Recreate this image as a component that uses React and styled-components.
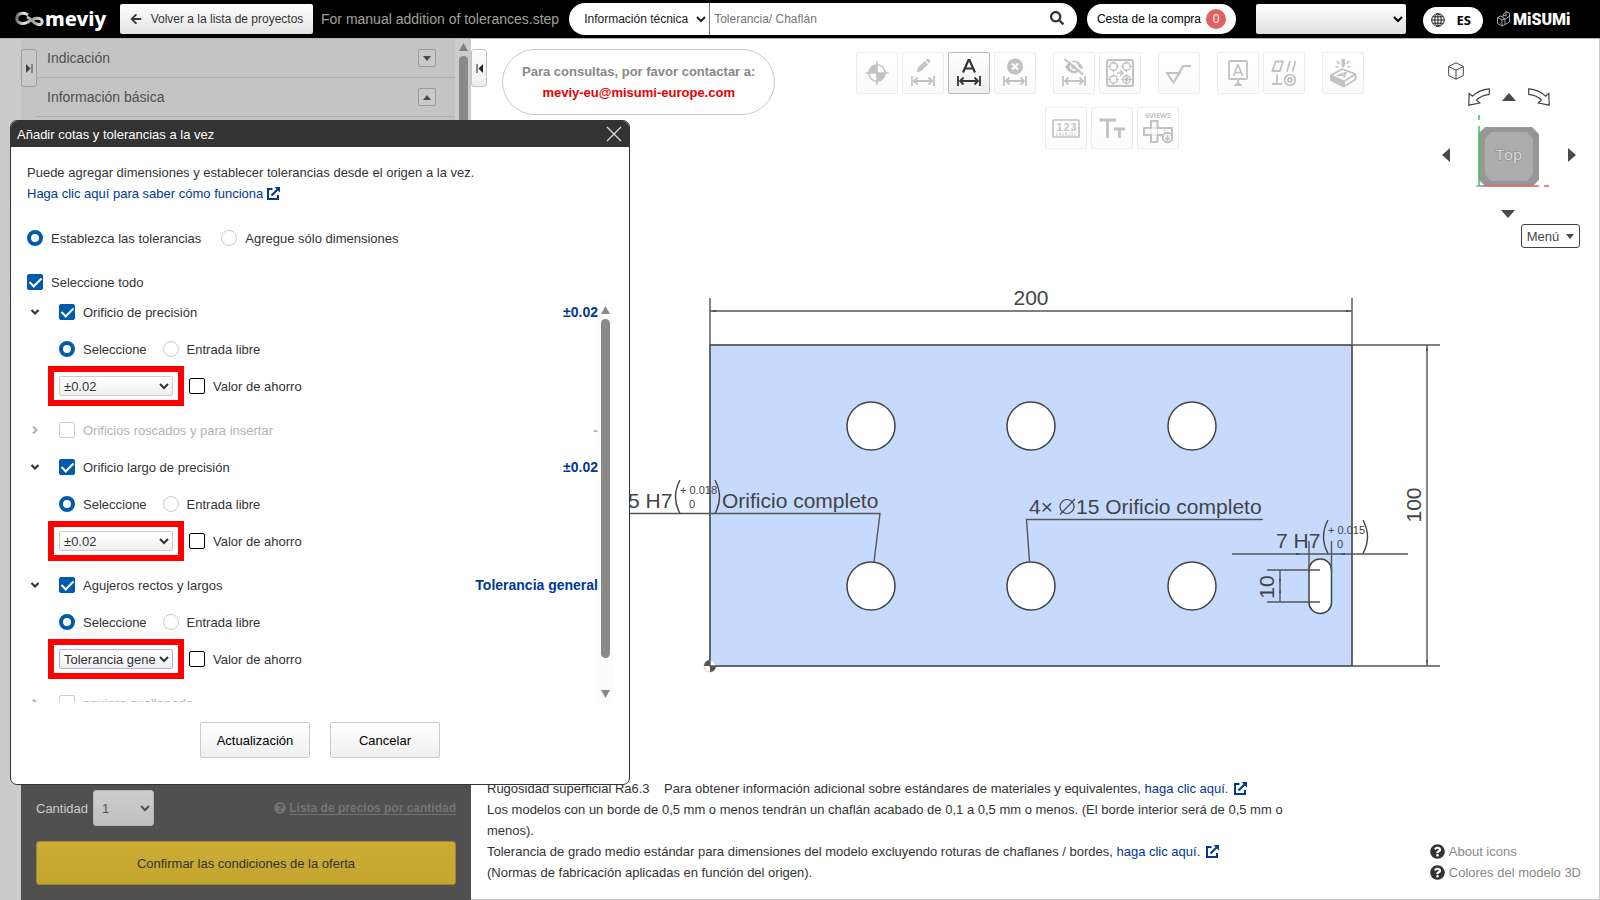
import React, { useState } from 'react'
import styled, { createGlobalStyle } from 'styled-components'
import { FaArrowLeft, FaSearch, FaQuestionCircle } from 'react-icons/fa'

const GlobalStyle = createGlobalStyle`
  * {
    box-sizing: border-box;
  }

  body {
    margin: 0;
    background: #fff;
    color: #333;
    font-family: "Liberation Sans", Arial, sans-serif;
    font-size: 13px;
  }

  button, input, select {
    font-family: inherit;
    font-size: 13px;
  }

  a {
    color: #003894;
    text-decoration: none;
  }
`

const Page = styled.div`
  display: flex;
  flex-direction: column;
  min-height: 100vh;
`

/* ---------- header ---------- */

const Header = styled.header`
  display: flex;
  align-items: center;
  height: 38px;
  padding: 0 29px 0 15px;
  background: #000;
`

const Logo = styled.a`
  display: flex;
  align-items: center;
  width: 105px;
  color: #fff;
  font-family: "Noto Sans", "Open Sans", sans-serif;
  font-size: 20px;
  font-weight: 800;
  line-height: 24px;
`

const BackButton = styled.button`
  display: flex;
  align-items: center;
  justify-content: center;
  gap: 9px;
  width: 193px;
  height: 30px;
  margin-right: 8px;
  padding: 0;
  border: 0;
  border-radius: 2px;
  background: linear-gradient(#fff, #e2e2e2);
  color: #333;
  font-size: 12px;
  white-space: nowrap;
`

const FileName = styled.span`
  margin-right: 10px;
  color: #a3a09b;
  font-size: 14px;
  white-space: nowrap;
`

const Search = styled.form`
  display: flex;
  flex: 1;
  height: 32px;
  overflow: hidden;
  border-radius: 16px;
  background: #fff;

  select {
    width: 141px;
    padding: 0 2px 0 11px;
    border: 0;
    border-right: 1px solid #777;
    background: transparent;
    color: #222;
    font-size: 12px;
  }

  input {
    flex: 1;
    min-width: 0;
    padding: 0 4px;
    border: 0;
    background: transparent;
    font-size: 12px;
  }

  input::placeholder {
    color: #777;
  }

  button {
    padding: 0 13px;
    border: 0;
    background: transparent;
    color: #333;
    font-size: 14px;
    line-height: 1;
  }
`

const CartButton = styled.button`
  display: flex;
  align-items: center;
  gap: 5px;
  height: 30px;
  margin: 0 20px 0 10px;
  padding: 0 10px;
  border: 0;
  border-radius: 15px;
  background: #fff;
  color: #000;
  font-size: 12px;
  white-space: nowrap;

  b {
    width: 20px;
    border-radius: 50%;
    background: #e06161;
    color: #fff;
    font-weight: 400;
    line-height: 20px;
  }
`

const AccountSelect = styled.select`
  width: 150px;
  height: 30px;
  padding: 0 4px 0 0;
  border: 0;
  border-radius: 2px;
  background: linear-gradient(#fff, #e0e0e0);
`

const LangButton = styled.button`
  display: flex;
  align-items: center;
  justify-content: space-between;
  width: 60px;
  height: 27px;
  margin: 2px 14px 0 17px;
  padding: 0 12px 0 8px;
  border: 0;
  border-radius: 14px;
  background: #fff;
  color: #000;
  font-family: "Open Sans", sans-serif;
  font-weight: 700;
`

const Misumi = styled.a`
  display: flex;
  align-items: center;
  gap: 3px;
  width: 74px;
  color: #fff;
  font-family: Roboto, sans-serif;
  font-size: 16px;
  font-weight: 900;

  svg {
    flex: none;
  }
`

/* ---------- left panel ---------- */

const Body = styled.div`
  display: flex;
  flex: 1;
  border-top: 1px solid #b5b5b5;
`

const Strip = styled.div`
  width: 21px;
  background: #cbcbcb;
`

const Sidebar = styled.aside`
  display: flex;
  flex-direction: column;
  width: 450px;
  background: #c4c4c4;
`

const SideScroll = styled.div`
  display: flex;
  flex: 1;
`

const Toggle = styled.button`
  display: flex;
  align-items: center;
  justify-content: center;
  flex: none;
  width: 16px;
  height: 38px;
  margin-top: 10px;
  padding: 0;
  border: 1px solid ${p => (p.$dim ? '#9e9e9e' : '#c2c2c2')};
  border-radius: 3px;
  background: ${p => (p.$dim ? '#c9c9c9' : 'linear-gradient(#fff, #eee)')};
`

const Sections = styled.div`
  flex: 1;
`

const SideRow = styled.div`
  display: flex;
  align-items: center;
  justify-content: space-between;
  height: 39px;
  padding: 0 19px 0 10px;
  border-bottom: 1px solid #adadad;
  color: #505050;
  font-size: 14px;

  button {
    display: flex;
    align-items: center;
    justify-content: center;
    width: 18px;
    height: 18px;
    padding: 0;
    border: 1px solid #999;
    border-radius: 2px;
    background: #c9c9c9;
  }
`

const Order = styled.form`
  display: flex;
  flex-direction: column;
  gap: 15px;
  padding: 15px;
  background: #505050;
  color: #ccc;
`

const Quantity = styled.div`
  display: flex;
  align-items: center;

  select {
    width: 61px;
    height: 36px;
    margin-left: 5px;
    padding: 0 7px 0 4px;
    border: 1px solid #b4b4b4;
    border-radius: 3px;
    background: linear-gradient(#cdcdcd, #c0c0c0);
    color: #505050;
  }

  a {
    display: flex;
    align-items: center;
    gap: 3px;
    margin-left: auto;
    color: #747474;
    font-size: 12px;
    font-weight: 700;
  }

  u {
    text-underline-offset: 2px;
  }
`

const ConfirmButton = styled.button`
  height: 44px;
  border: 1px solid #9c872b;
  border-radius: 3px;
  background: linear-gradient(#ccac33, #c3a630);
  color: #333;
`

/* ---------- scroll bars ---------- */

const ScrollTrack = styled.div`
  display: flex;
  flex-direction: column;
  align-items: center;
  gap: 5px;
  flex: none;
  width: ${p => (p.$wide ? 16 : 15)}px;
  padding: 4px 0;
  background: ${p => (p.$wide ? '#ccc' : '#fcfcfc')};

  svg {
    flex: none;
    display: block;
  }
`

const Thumb = styled.div`
  flex: ${p => p.$grow};
  width: 9px;
  border-radius: 5px;
  background: #8a8a8a;
`

const Rest = styled.div`
  flex: ${p => p.$grow};
`

/* ---------- workspace ---------- */

const Workspace = styled.main`
  display: flex;
  flex-direction: column;
  flex: 1;
  min-width: 0;
  border: solid #ccc;
  border-width: 0 1px 1px 0;
`

const TopRow = styled.div`
  display: flex;
  align-items: flex-start;
  height: 210px;
  padding-right: 19px;
`

const Contact = styled.p`
  margin: 10px auto 0 15px;
  padding: 11px 19px;
  border: 1px solid #c8c8c8;
  border-radius: 33px;
  color: #888;
  font-weight: 700;
  line-height: 21px;
  text-align: center;
  white-space: nowrap;

  a {
    color: #e60000;
  }
`

const Toolbar = styled.div`
  display: flex;
  flex-direction: column;
  align-items: center;
  gap: 13px;
  padding: 13px 0 0 2px;
`

const ToolLine = styled.div`
  display: flex;
  gap: 17px;

  & + & {
    padding-left: 4px;
  }
`

const ToolGroup = styled.div`
  display: flex;
  gap: 4px;
`

const Tool = styled.button`
  width: 42px;
  height: 42px;
  padding: 0;
  border: 1px solid ${p => (p.$active ? '#bbb' : '#ececec')};
  border-radius: 2px;
  background: ${p => (p.$active ? 'linear-gradient(#fff, #eee)' : 'linear-gradient(#fff, #fbfbfb)')};
  color: ${p => (p.$active ? '#333' : '#c2c2c2')};

  svg {
    display: block;
    margin: -1px;
  }
`

const Navigator = styled.div`
  display: flex;
  flex-direction: column;
  width: 138px;
  margin-left: auto;
  padding-top: 23px;

  button {
    padding: 0;
    border: 0;
    background: none;
  }

  svg {
    display: block;
  }
`

/* every row but the menu is centred on the cube */
const NavRow = styled.div`
  display: flex;
  align-items: center;
  width: 134px;
`

const HomeRow = styled(NavRow)`
  padding-left: 6px;
`

const TurnRow = styled(NavRow)`
  justify-content: center;
  gap: 12px;
  height: 31px;
  padding-top: 3px;
`

const CubeRow = styled(NavRow)`
  justify-content: space-between;
  height: 88px;
  margin-bottom: 11px;
`

const DownRow = styled(NavRow)`
  justify-content: center;
  align-items: flex-start;
  height: 14px;
  padding-right: 2px;
`

const MenuButton = styled.button`
  && {
    display: flex;
    align-items: center;
    justify-content: center;
    gap: 7px;
    align-self: flex-end;
    width: 59px;
    height: 24px;
    border: 1px solid #444;
    border-radius: 3px;
    background: #fff;
    color: #444;
  }
`

const Canvas = styled.svg`
  display: block;
  flex: 1 1 0;
  width: 100%;
  min-height: 0;
  font-family: "Liberation Sans", Arial, sans-serif;
`

const Notes = styled.footer`
  display: flex;
  align-items: flex-end;
  justify-content: space-between;
  gap: 20px;
  padding: 0 18px 16px 16px;
  line-height: 21px;

  p {
    max-width: 810px;
    margin: 0;
  }
`

const HelpLinks = styled.div`
  a {
    display: flex;
    align-items: center;
    gap: 4px;
    color: #888;
    white-space: nowrap;
  }

  svg {
    color: #333;
    font-size: 15px;
  }
`

const ExternalIcon = styled.svg`
  margin-left: ${p => (p.$tight ? 4 : 6)}px;
  vertical-align: -2px;
`

/* ---------- dialog ---------- */

const Dialog = styled.section`
  position: absolute;
  top: 120px;
  left: 10px;
  width: 620px;
  overflow: hidden;
  border: 1px solid #333;
  border-radius: 7px;
  background: #fff;
`

const DialogTitle = styled.div`
  display: flex;
  align-items: center;
  justify-content: space-between;
  height: 26px;
  padding: 0 7px 0 6px;
  background: #333;
  color: #fff;

  h2 {
    margin: 0;
    font-size: 13px;
    font-weight: 400;
  }

  button {
    padding: 0;
    border: 0;
    background: none;
  }

  svg {
    display: block;
  }
`

const DialogBody = styled.form`
  padding: 15px 16px 26px;
`

const Intro = styled.p`
  margin: 0 0 24px;
  line-height: 21px;
`

const Line = styled.div`
  display: flex;
  align-items: center;
  gap: ${p => (p.$indent ? 16 : 20)}px;
  height: 20px;
  margin-bottom: ${p => p.$space || 17}px;
  padding-left: ${p => (p.$indent ? 32 : 0)}px;
  color: ${p => (p.$off ? '#b3b3b3' : '#333')};
`

const Option = styled.label`
  display: flex;
  align-items: center;
  gap: 8px;
`

const Radio = styled.input`
  appearance: none;
  width: 16px;
  height: 16px;
  margin: 0;
  border: 1px solid #ccc;
  border-radius: 50%;
  background: #fff;

  &:checked {
    border: 4px solid #005bac;
  }
`

const Check = styled.input`
  appearance: none;
  display: grid;
  place-items: center;
  width: 16px;
  height: 16px;
  margin: 0;
  border: 1px solid #000;
  border-radius: 2px;
  background: #fff;

  &:disabled {
    border-color: #ccc;
  }

  &:checked {
    border-color: #005bac;
    background: #005bac;
  }

  &:checked::after {
    content: "";
    width: 5px;
    height: 10px;
    margin-bottom: 3px;
    border: solid #fff;
    border-width: 0 2px 2px 0;
    transform: rotate(45deg);
  }
`

const List = styled.div`
  display: flex;
  height: 400px;
  margin-bottom: 20px;
  overflow: hidden;
`

const ListItems = styled.div`
  flex: 1;
`

const Group = styled.div`
  padding-bottom: ${p => (p.$open ? 7 : 0)}px;
`

const Fold = styled.button`
  display: flex;
  justify-content: center;
  width: 16px;
  margin-right: -4px;
  padding: 0;
  border: 0;
  background: none;
  color: inherit;
`

const Value = styled.strong`
  margin-left: auto;
  color: ${p => (p.$off ? '#b3b3b3' : '#003894')};
  font-size: 14px;
`

const Marked = styled.div`
  margin: -4px -5px;
  padding: 4px 5px;
  outline: 6px solid #f00;

  select {
    display: block;
    width: 114px;
    height: 20px;
    padding: 0;
    border: 1px solid ${p => (p.$focus ? '#a9b4f5' : '#ccc')};
    border-radius: 2px;
    background: linear-gradient(#fff, #efefef);
    color: #333;
  }
`

const Actions = styled.div`
  display: flex;
  justify-content: center;
  gap: 20px;

  button {
    width: 110px;
    height: 36px;
    border: 1px solid #ccc;
    border-radius: 2px;
    background: linear-gradient(#fff, #efefef);
    color: #000;
  }
`

/* ---------- small drawings ---------- */

const shapes = {
  up: [14, 8, '0,8 7,0 14,8'],
  down: [14, 8, '0,0 14,0 7,8'],
  left: [8, 14, '8,0 8,14 0,7'],
  right: [8, 14, '0,0 8,7 0,14'],
  smallUp: [8, 5, '0,5 4,0 8,5'],
  smallDown: [8, 5, '0,0 8,0 4,5'],
  barUp: [9, 8, '0,8 4.5,0 9,8'],
  barDown: [9, 8, '0,0 9,0 4.5,8'],
}

const Triangle = ({ shape, color = '#4a4a4a' }) => {
  const [w, h, points] = shapes[shape]
  return (
    <svg width={w} height={h} viewBox={`0 0 ${w} ${h}`} fill={color} aria-hidden="true">
      <polygon points={points} />
    </svg>
  )
}

const Chevron = ({ open }) => (
  <svg width="10" height="10" viewBox="0 0 10 10" fill="none" stroke="currentColor" strokeWidth="2.2" aria-hidden="true">
    <path d={open ? 'M1.500 3 5 6.500 8.500 3' : 'M3 1.500 6.500 5 3 8.500'} />
  </svg>
)

const External = ({ tight }) => (
  <ExternalIcon $tight={tight} width="13" height="13" viewBox="0 0 13 13" fill="none" stroke="#003894" strokeWidth="2" aria-hidden="true">
    <path d="M5.5 2H1v10h10V8M4.5 8.5 10.5 2.5" />
    <path d="M7.5 0H13v5.5z" fill="#003894" stroke="none" />
  </ExternalIcon>
)

const Dimension = () => (
  <path d="M10 24v10M32 24v10M12 29h18M15.5 25.5 12 29l3.5 3.5M26.5 25.5 30 29l-3.5 3.5" fill="none" stroke="currentColor" strokeWidth="1.8" />
)

const Target = ({ x, y, full }) => (
  <g transform={`translate(${x} ${y})`} fill="none" stroke="currentColor">
    <circle r="3.8" strokeWidth="1.4" />
    <path d="M0-5.5v3M0 2.5v3M-5.500 0h3M2.500 0h3" />
    {full && <circle r="1.8" fill="currentColor" />}
  </g>
)

const toolIcons = {
  origin: (
    <g stroke="currentColor" strokeWidth="1.6" fill="none">
      <circle cx="21" cy="21" r="8.200" />
      <path d="M21 9v24M9.500 21h23" />
      <path d="M21 21v-8.200a8.200 8.200 0 0 0-8.200 8.200zM21 21v8.200a8.200 8.200 0 0 0 8.200-8.200z" fill="currentColor" stroke="none" />
    </g>
  ),
  edit: (
    <g>
      <path d="m14.500 20.500 1.500-5 6.800-6.500 3.200 3.200-6.700 6.700zM23.800 8.200l1.300-1.200q1-.6 2 .3l.9.900q.8 1-.1 2l-1 1z" fill="currentColor" />
      <Dimension />
    </g>
  ),
  auto: (
    <g>
      <path d="M15 20.500 20.500 8h1L27 20.500M17 16.500h8" fill="none" stroke="currentColor" strokeWidth="2.200" />
      <Dimension />
    </g>
  ),
  remove: (
    <g>
      <circle cx="21" cy="14.500" r="8" fill="currentColor" />
      <path d="m18 11.500 6 6M24 11.500l-6 6" stroke="#fff" strokeWidth="2" />
      <Dimension />
    </g>
  ),
  hide: (
    <g>
      <path d="M12 15q9-13 18 0-9 13-18 0z" fill="currentColor" />
      <circle cx="21" cy="14.500" r="3.500" fill="none" stroke="#fff" strokeWidth="1.500" />
      <path d="m13.500 6 17 14" stroke="#fff" strokeWidth="1.600" />
      <path d="m11.500 7 18.500 15.500" stroke="currentColor" strokeWidth="1.800" />
      <Dimension />
    </g>
  ),
  holes: (
    <g>
      <rect x="8" y="8" width="26" height="26" rx="2" fill="none" stroke="currentColor" strokeWidth="2" />
      <Target x="14.500" y="14.500" />
      <Target x="27.500" y="14.500" />
      <Target x="14.500" y="27.500" />
      <Target x="27.500" y="27.500" full />
      <path d="M18 21h5.500M21 18l3 3-3 3" fill="none" stroke="currentColor" strokeWidth="1.600" />
    </g>
  ),
  surface: (
    <path d="M9 21h12.500l-6 9.500zM15.500 30.500 25 14h8" fill="none" stroke="currentColor" strokeWidth="2" />
  ),
  datum: (
    <g>
      <rect x="12" y="9" width="18" height="18" rx="1" fill="none" stroke="currentColor" strokeWidth="1.800" />
      <path d="M16.500 24 20.600 13h.8l4.100 11M18 20.500h6" fill="none" stroke="currentColor" strokeWidth="1.700" />
      <path d="M21 27v3" stroke="currentColor" strokeWidth="2" />
      <path d="m16.500 34 4.500-5 4.500 5z" fill="currentColor" />
    </g>
  ),
  geometry: (
    <g fill="none" stroke="currentColor" strokeWidth="1.800">
      <path d="M12.500 9.500H20L17 19H9.500zM27 9l-3 10.500M32.500 9l-3 10.500M14 22.500V32M9 32h10" />
      <circle cx="27" cy="28" r="5.300" />
      <circle cx="27" cy="28" r="2" />
    </g>
  ),
  engrave: (
    <g fill="none" stroke="currentColor" strokeWidth="1.700" strokeLinejoin="round">
      <path d="m9 23.500 11-6.500 13.500 5L22 29.500z" />
      <path d="M9 23.500v4.500L22 34.500l11.500-7V22M22 29.500v5" />
      <path d="M9 23.500 22 29.500v5L9 28z" fill="currentColor" />
      <path d="m15 24 9-3.500-2 5M18 22.500l4 1.500" />
      <path d="m15 9 2.500 3M27 9l-2.500 3M13.500 14.500l3 .5M28.500 14.500l-3 .5" />
      <path d="M19.500 7h3.500v6l-1.800 3-1.700-3z" fill="currentColor" stroke="none" />
    </g>
  ),
  ruler: (
    <g>
      <rect x="8" y="13" width="26" height="17" rx="1" fill="none" stroke="currentColor" strokeWidth="1.700" />
      <g fontSize="10" fontWeight="700" textAnchor="middle" fill="currentColor">
        <text x="14.500" y="24">1</text>
        <text x="21.500" y="24">2</text>
        <text x="28.500" y="24">3</text>
      </g>
      <path d="M12 29v-2.500M15 29v-4M18 29v-2.500M21 29v-4M24 29v-2.500M27 29v-4M30 29v-2.500" stroke="currentColor" />
    </g>
  ),
  text: (
    <path d="M8.500 13H25M16.500 13v18M23 22h11M28.500 22v9" fill="none" stroke="currentColor" strokeWidth="2.800" />
  ),
  views: (
    <g fill="none" stroke="currentColor">
      <text x="21" y="11" textAnchor="middle" fontSize="7" fontWeight="700" fill="currentColor" stroke="none" fontFamily="Open Sans, sans-serif">6VIEWS</text>
      <path d="M14 14h6.500v7H35v7H20.500v7H14v-7H7v-7h7z" strokeWidth="2" strokeLinejoin="round" />
      <path d="M14 21h6.500v7H14zM27.500 21v7" strokeWidth=".6" />
      <circle cx="30.500" cy="30.500" r="4.800" fill="#fff" strokeWidth="2" />
      <path d="M30.500 27.500v5M28.300 30.800l2.200 2.200 2.200-2.200" strokeWidth="1.600" />
    </g>
  ),
}

const toolRows = [
  [
    [['origin', 'Origen'], ['edit', 'Editar cota'], ['auto', 'Añadir cotas'], ['remove', 'Eliminar cota']],
    [['hide', 'Ocultar cotas'], ['holes', 'Agrupar orificios']],
    [['surface', 'Rugosidad']],
    [['datum', 'Referencia'], ['geometry', 'Tolerancia geométrica']],
    [['engrave', 'Grabado']],
  ],
  [[['ruler', 'Regla'], ['text', 'Texto'], ['views', 'Seis vistas']]],
]

const Turn = ({ flip }) => (
  <svg width="22" height="18" viewBox="0 0 22 18" fill="#fff" stroke="#444" strokeWidth="1.200" aria-hidden="true">
    <path
      transform={flip ? 'translate(22 0) scale(-1 1)' : undefined}
      d="M.8 17.200 1.200 5.500l3.300 2.700Q11 1.500 21.300.8v5.500Q13 7.200 8.500 12l3.300 3z"
    />
  </svg>
)

const ViewCube = () => (
  <svg width="84" height="88" viewBox="-3 0 84 88" aria-label="Top">
    <path d="M15 16h47l7 7v46l-6 6H15l-6-6V22z" fill="#979797" />
    <path d="M21 21h36l6 7v35l-6 7H21l-6-7V28z" fill="#acacac" />
    <path d="M9 4v5M9 15v60" stroke="#34c759" strokeWidth="1.500" />
    <path d="M9 75h60M74 75h5" stroke="#f25555" strokeWidth="1.500" />
    <path d="M6 75h7" stroke="#7ab8f5" strokeWidth="1.500" />
    <text x="39" y="49" textAnchor="middle" fontSize="15" fill="#dcdcdc" stroke="#949494" strokeWidth="1.500" paintOrder="stroke" fontFamily="Open Sans, sans-serif">Top</text>
  </svg>
)

/* ---------- part drawing ---------- */

const holes = [[871, 426], [1031, 426], [1192, 426], [871, 586], [1031, 586], [1192, 586]]

const Fit = ({ x, y, upper }) => (
  <g transform={`translate(${x} ${y})`}>
    <path d="M6-28Q-3-11 6 5.500M41-28Q50-11 41 5.500" fill="none" stroke="#444" strokeWidth="1.400" />
    <g fontSize="11">
      <text x="6" y="-14">+ {upper}</text>
      <text x="15" y="0">0</text>
    </g>
  </g>
)

const PartDrawing = () => (
  <Canvas viewBox="471 249 1128 520" preserveAspectRatio="xMinYMin meet">
    <rect x="710" y="345" width="642" height="321" fill="#c6dafe" stroke="#444" strokeWidth="1.600" />
    <g fill="#fff" stroke="#444" strokeWidth="1.500">
      {holes.map(([cx, cy]) => <circle key={`${cx}-${cy}`} cx={cx} cy={cy} r="24" />)}
      <rect x="1309" y="559" width="22.500" height="54.500" rx="11" />
    </g>
    <g fill="none" stroke="#555" strokeWidth="1.400">
      <path d="M710 298v47M1352 298v47M710 311h642" />
      <path d="M1352 345h88M1352 666h88M1427 345v321" />
      <path d="M629 513.500h251l-6 48.500" />
      <path d="M1263 519.500h-236.500l3 42" />
      <path d="M1232 554h176M1309 541v32M1331.500 541v32" />
      <path d="M1267 570h53M1267 602h53M1280 570v32" />
    </g>
    <g fill="#444">
      <path d="M711 311l5-1v2zM1351 311l-5-1v2zM1427 346l-1 5h2zM1427 665l-1-5h2zM1301 554l-5-1v2zM1340 554l5-1v2zM1280 583l-1-4h2zM1280 589l-1 4h2z" />
    </g>
    <circle cx="710" cy="666" r="6" fill="#fff" stroke="#aaa" strokeWidth=".6" />
    <path d="M710 666v-6a6 6 0 0 0-6 6zM710 666v6a6 6 0 0 0 6-6z" fill="#555" />
    <path d="M710 659v7h7" fill="none" stroke="#555" strokeWidth="1.400" />
    <g fill="#444" fontSize="21">
      <text x="1031" y="305" textAnchor="middle">200</text>
      <text transform="translate(1421 505) rotate(-90)" textAnchor="middle">100</text>
      <text transform="translate(1274 587) rotate(-90)" textAnchor="middle">10</text>
      <text x="628" y="508">5 H7</text>
      <Fit x="674" y="508" upper="0.018" />
      <text x="722" y="508">Orificio completo</text>
      <text x="1029" y="514">4×</text>
      <g fill="none" stroke="#444" strokeWidth="1.200">
        <circle cx="1067" cy="506.500" r="7" />
        <path d="m1060 514.500 15-15.500" />
      </g>
      <text x="1076" y="514">15 Orificio completo</text>
      <text x="1276" y="548">7 H7</text>
      <Fit x="1322" y="548" upper="0.015" />
    </g>
  </Canvas>
)

/* ---------- tolerance list ---------- */

const groups = [
  { id: 'precision', name: 'Orificio de precisión', value: '±0.02', open: true },
  { id: 'threaded', name: 'Orificios roscados y para insertar', value: '-' },
  { id: 'slot', name: 'Orificio largo de precisión', value: '±0.02', open: true },
  { id: 'straight', name: 'Agujeros rectos y largos', value: 'Tolerancia general', open: true, focus: true },
  { id: 'countersunk', name: 'agujero avellanado', value: '' },
]

const ToleranceGroup = ({ group }) => {
  const { id, name, value, open, focus } = group
  return (
    <Group $open={open}>
      <Line $off={!open}>
        <Fold type="button" aria-label={name}><Chevron open={open} /></Fold>
        <Option>
          <Check type="checkbox" defaultChecked={open} disabled={!open} />
          {name}
        </Option>
        <Value $off={!open}>{value}</Value>
      </Line>
      {open && (
        <>
          <Line $indent>
            <Option><Radio type="radio" name={`${id}-mode`} defaultChecked />Seleccione</Option>
            <Option><Radio type="radio" name={`${id}-mode`} />Entrada libre</Option>
          </Line>
          <Line $indent>
            <Marked $focus={focus}>
              <select aria-label={name} defaultValue={value}>
                <option>{value}</option>
              </select>
            </Marked>
            <Option><Check type="checkbox" />Valor de ahorro</Option>
          </Line>
        </>
      )}
    </Group>
  )
}

const ToleranceDialog = ({ onClose }) => (
  <Dialog role="dialog" aria-labelledby="dialog-title">
    <DialogTitle>
      <h2 id="dialog-title">Añadir cotas y tolerancias a la vez</h2>
      <button type="button" aria-label="Cerrar" onClick={onClose}>
        <svg width="16" height="16" viewBox="0 0 16 16" stroke="#ddd" strokeWidth="1.200"><path d="m1 1 14 14M15 1 1 15" /></svg>
      </button>
    </DialogTitle>
    <DialogBody onSubmit={e => e.preventDefault()}>
      <Intro>
        Puede agregar dimensiones y establecer tolerancias desde el origen a la vez.<br />
        <a href="#ayuda">Haga clic aquí para saber cómo funciona<External tight /></a>
      </Intro>
      <Line $space={24}>
        <Option><Radio type="radio" name="mode" defaultChecked />Establezca las tolerancias</Option>
        <Option><Radio type="radio" name="mode" />Agregue sólo dimensiones</Option>
      </Line>
      <Line $space={10}>
        <Option><Check type="checkbox" defaultChecked />Seleccione todo</Option>
      </Line>
      <List>
        <ListItems>
          {groups.map(group => <ToleranceGroup key={group.id} group={group} />)}
        </ListItems>
        <ScrollTrack>
          <Triangle shape="barUp" color="#8a8a8a" />
          <Thumb $grow={339} />
          <Rest $grow={22} />
          <Triangle shape="barDown" color="#8a8a8a" />
        </ScrollTrack>
      </List>
      <Actions>
        <button type="submit">Actualización</button>
        <button type="button" onClick={onClose}>Cancelar</button>
      </Actions>
    </DialogBody>
  </Dialog>
)

const TopBar = () => (
  <Header>
    <Logo href="#inicio">
      <svg width="30" height="16" viewBox="0 0 30 16" fill="none" aria-hidden="true">
        <defs>
          <linearGradient id="metal"><stop stopColor="#777" /><stop offset=".3" stopColor="#eee" /><stop offset=".6" stopColor="#999" /><stop offset="1" stopColor="#ddd" /></linearGradient>
        </defs>
        <path d="M13 4C9 1 2 2 1.800 7.500c0 5.500 7 6 11.200 3.500 3-2 8-5.500 12.500-3 3 2 1.500 6-2 5.500-4-.5-7-5.500-11.500-7.500" stroke="url(#metal)" strokeWidth="3" />
      </svg>
      meviy
    </Logo>
    <BackButton type="button"><FaArrowLeft size={12} />Volver a la lista de proyectos</BackButton>
    <FileName>For manual addition of tolerances.step</FileName>
    <Search onSubmit={e => e.preventDefault()}>
      <select aria-label="Tipo de búsqueda"><option>Información técnica</option></select>
      <input type="text" aria-label="Buscar" placeholder="Tolerancia/ Chaflán" />
      <button type="submit" aria-label="Buscar"><FaSearch /></button>
    </Search>
    <CartButton type="button">Cesta de la compra<b>0</b></CartButton>
    <AccountSelect aria-label="Cuenta"><option> </option></AccountSelect>
    <LangButton type="button">
      <svg width="14" height="14" viewBox="0 0 14 14" fill="none" stroke="#222" aria-hidden="true">
        <circle cx="7" cy="7" r="6.300" />
        <ellipse cx="7" cy="7" rx="3.200" ry="6.300" />
        <path d="M7 .7v12.600M.7 7h12.600M1.800 3.800h10.400M1.800 10.200h10.400" />
      </svg>
      ES
    </LangButton>
    <Misumi href="#misumi">
      <svg width="13" height="16" viewBox="0 0 13 16" fill="none" stroke="#ccc" strokeWidth=".8" aria-hidden="true">
        <path d="M.5 6.500 5 9v6L.5 12.500zM5 9l3-1.500v6L5 15M.5 6.500 3.500 5l2 1M6 4l3-3.500 3.500 1.500V11L8 13.500M6 4v3l2.500 1L12.500 5M6 4l3 1V.5" />
      </svg>
      MiSUMi
    </Misumi>
  </Header>
)

const LeftPanel = () => (
  <Sidebar>
    <SideScroll>
      <Toggle type="button" $dim aria-label="Contraer">
        <svg width="7" height="9" viewBox="0 0 7 9" fill="#444"><path d="M0 0l4.500 4.500L0 9zM5.500 0h1v9h-1z" /></svg>
      </Toggle>
      <Sections>
        <SideRow>Indicación<button type="button" aria-label="Abrir"><Triangle shape="smallDown" /></button></SideRow>
        <SideRow>Información básica<button type="button" aria-label="Cerrar"><Triangle shape="smallUp" /></button></SideRow>
      </Sections>
      <ScrollTrack $wide>
        <Triangle shape="barUp" color="#808080" />
        <Thumb $grow={1} />
      </ScrollTrack>
    </SideScroll>
    <Order onSubmit={e => e.preventDefault()}>
      <Quantity>
        <label htmlFor="cantidad">Cantidad</label>
        <select id="cantidad"><option>1</option></select>
        <a href="#precios"><FaQuestionCircle size={12} /><u>Lista de precios por cantidad</u></a>
      </Quantity>
      <ConfirmButton type="submit">Confirmar las condiciones de la oferta</ConfirmButton>
    </Order>
  </Sidebar>
)

const App = () => {
  const [dialogOpen, setDialogOpen] = useState(true)

  return (
    <Page>
      <GlobalStyle />
      <TopBar />
      <Body>
        <Strip />
        <LeftPanel />
        <Workspace>
          <TopRow>
            <Toggle type="button" aria-label="Mostrar panel">
              <svg width="7" height="9" viewBox="0 0 7 9" fill="#222"><path d="M7 0L2.500 4.500 7 9zM.5 0h1v9h-1z" /></svg>
            </Toggle>
            <Contact>
              Para consultas, por favor contactar a:<br />
              <a href="mailto:meviy-eu@misumi-europe.com">meviy-eu@misumi-europe.com</a>
            </Contact>
            <Toolbar>
              {toolRows.map((row, i) => (
                <ToolLine key={i}>
                  {row.map((tools, j) => (
                    <ToolGroup key={j}>
                      {tools.map(([icon, label]) => (
                        <Tool
                          key={icon}
                          type="button"
                          aria-label={label}
                          $active={icon === 'auto'}
                          onClick={icon === 'auto' ? () => setDialogOpen(true) : undefined}
                        >
                          <svg width="42" height="42" viewBox="0 0 42 42">{toolIcons[icon]}</svg>
                        </Tool>
                      ))}
                    </ToolGroup>
                  ))}
                </ToolLine>
              ))}
            </Toolbar>
            <Navigator>
              <HomeRow>
                <button type="button" aria-label="Vista inicial">
                  <svg width="16" height="18" viewBox="0 0 16 18" fill="none" stroke="#444"><path d="M8 .8 15.300 4.500v9L8 17.200.7 13.500v-9zM.7 4.500 8 8.200l7.300-3.700M8 8.200v9" /></svg>
                </button>
              </HomeRow>
              <TurnRow>
                <button type="button" aria-label="Girar a la izquierda"><Turn /></button>
                <button type="button" aria-label="Arriba"><Triangle shape="up" /></button>
                <button type="button" aria-label="Girar a la derecha"><Turn flip /></button>
              </TurnRow>
              <CubeRow>
                <button type="button" aria-label="Izquierda"><Triangle shape="left" /></button>
                <ViewCube />
                <button type="button" aria-label="Derecha"><Triangle shape="right" /></button>
              </CubeRow>
              <DownRow>
                <button type="button" aria-label="Abajo"><Triangle shape="down" /></button>
              </DownRow>
              <MenuButton type="button">Menú<Triangle shape="smallDown" /></MenuButton>
            </Navigator>
          </TopRow>
          <PartDrawing />
          <Notes>
            <p>
              Rugosidad superficial Ra6.3 &nbsp;&nbsp; Para obtener información adicional sobre estándares de materiales y equivalentes, <a href="#materiales">haga clic aquí.<External /></a><br />
              Los modelos con un borde de 0,5 mm o menos tendrán un chaflán acabado de 0,1 a 0,5 mm o menos. (El borde interior será de 0,5 mm o menos).<br />
              Tolerancia de grado medio estándar para dimensiones del modelo excluyendo roturas de chaflanes / bordes, <a href="#tolerancias">haga clic aquí.<External /></a><br />
              (Normas de fabricación aplicadas en función del origen).
            </p>
            <HelpLinks>
              <a href="#iconos"><FaQuestionCircle />About icons</a>
              <a href="#colores"><FaQuestionCircle />Colores del modelo 3D</a>
            </HelpLinks>
          </Notes>
        </Workspace>
      </Body>
      {dialogOpen && <ToleranceDialog onClose={() => setDialogOpen(false)} />}
    </Page>
  )
}

export default App
